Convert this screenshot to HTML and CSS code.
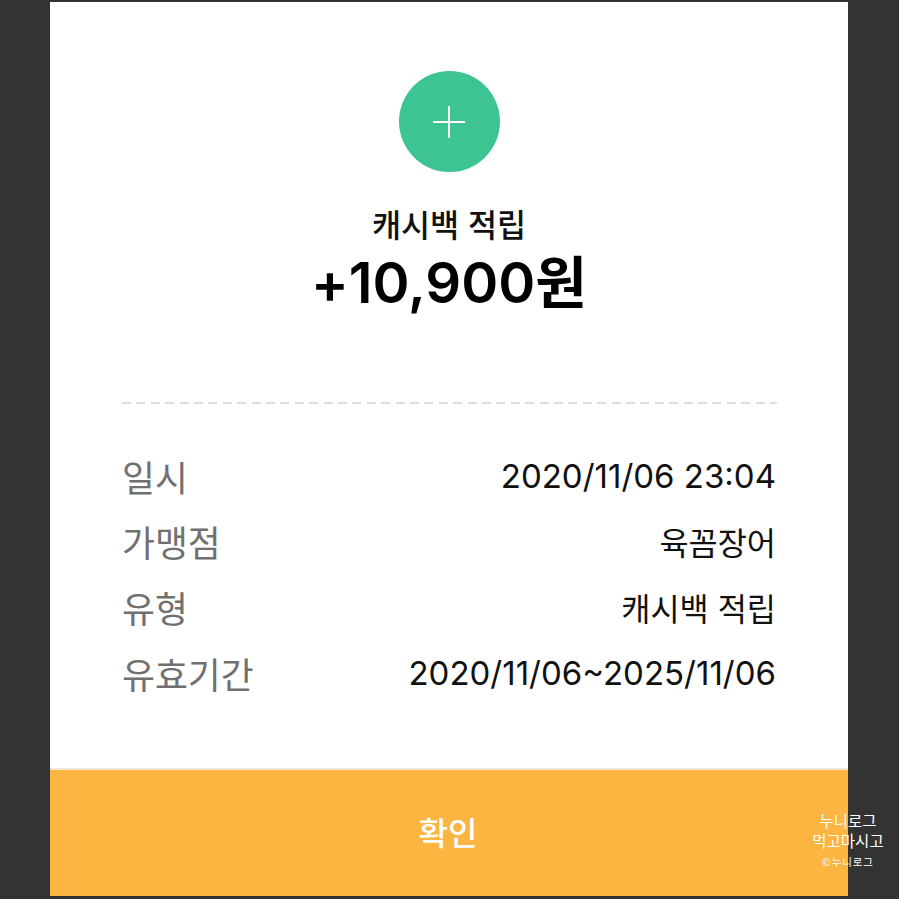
FILE: index.html
```html
<!DOCTYPE html>
<html lang="ko">
<head>
    <meta charset="UTF-8">
    <meta name="viewport" content="width=device-width, initial-scale=1.0">
    <title>캐시백 적립</title>
    <link rel="stylesheet" href="styles.css">
</head>
<body>
    <main class="receipt">
        <section class="summary">
            <div class="icon-circle">
                <svg width="32" height="32" viewBox="0 0 32 32">
                    <path d="M16 0V32M0 16H32" stroke="#fff" stroke-width="2" fill="none"/>
                </svg>
            </div>
            <h2 class="summary-title">캐시백 적립</h2>
            <p class="summary-amount">+10,900원</p>
        </section>

        <div class="divider"></div>

        <dl class="details">
            <div class="row"><dt>일시</dt><dd>2020/11/06 23:04</dd></div>
            <div class="row"><dt>가맹점</dt><dd class="ko">육꼼장어</dd></div>
            <div class="row"><dt>유형</dt><dd class="ko">캐시백 적립</dd></div>
            <div class="row"><dt>유효기간</dt><dd>2020/11/06~2025/11/06</dd></div>
        </dl>

        <button type="button" class="confirm">확인</button>
    </main>

    <div class="watermark">
        <div>누니로그</div>
        <div>먹고마시고</div>
        <div class="watermark-small">©누니로그</div>
    </div>
</body>
</html>
```

FILE: styles.css
```css
* {
    box-sizing: border-box;
}
html, body {
    height: 100%;
}
body {
    margin: 0;
    padding: 2px 51px 3px 50px;
    background-color: #333333;
    font-family: "Noto Sans CJK KR", "Liberation Sans", sans-serif;
    overflow: hidden;
}
.receipt {
    height: 100%;
    background-color: #ffffff;
    display: flex;
    flex-direction: column;
}
.summary {
    display: flex;
    flex-direction: column;
    align-items: center;
    padding-top: 69px;
}
.icon-circle {
    width: 101px;
    height: 101px;
    border-radius: 50%;
    background-color: #3dc492;
    display: flex;
    align-items: center;
    justify-content: center;
}
.summary-title {
    margin: 29px 0 0;
    font-size: 31.6px;
    line-height: 44px;
    font-weight: 500;
    color: #111111;
}
.summary-amount {
    margin: 3px 0 0;
    font-family: Inter, "Noto Sans CJK KR", sans-serif;
    font-size: 56.2px;
    line-height: 70px;
    font-weight: 600;
    color: #000000;
}
.divider {
    margin: 84px 71px 0 72px;
    height: 2px;
    background: repeating-linear-gradient(to right, #dddddd 0, #dddddd 9px, transparent 9px, transparent 14.4px);
}
.details {
    margin: 39px 72px 0 72px;
    flex: 1;
}
.row {
    display: flex;
    justify-content: space-between;
    align-items: center;
    height: 65.6px;
}
.row dt {
    font-size: 35.8px;
    font-weight: 400;
    color: #707070;
}
.row dd {
    margin: 0;
    font-family: Inter, "Noto Sans CJK KR", sans-serif;
    font-size: 33px;
    font-weight: 400;
    color: #111111;
}
.row dd.ko {
    font-size: 31.7px;
}
.confirm {
    height: 128px;
    padding: 0 2px 5px 0;
    border: none;
    border-top: 2px solid #f0e6d6;
    background-color: #fbb540;
    color: #ffffff;
    font-family: "Noto Sans CJK KR", sans-serif;
    font-size: 32px;
    font-weight: 500;
}
.watermark {
    position: absolute;
    left: 808px;
    top: 810px;
    width: 80px;
    text-align: center;
    color: #ffffff;
    font-size: 15.5px;
    line-height: 20px;
}
.watermark-small {
    margin-top: 2px;
    font-size: 10.5px;
    line-height: 20px;
    letter-spacing: 0.9px;
}
```
